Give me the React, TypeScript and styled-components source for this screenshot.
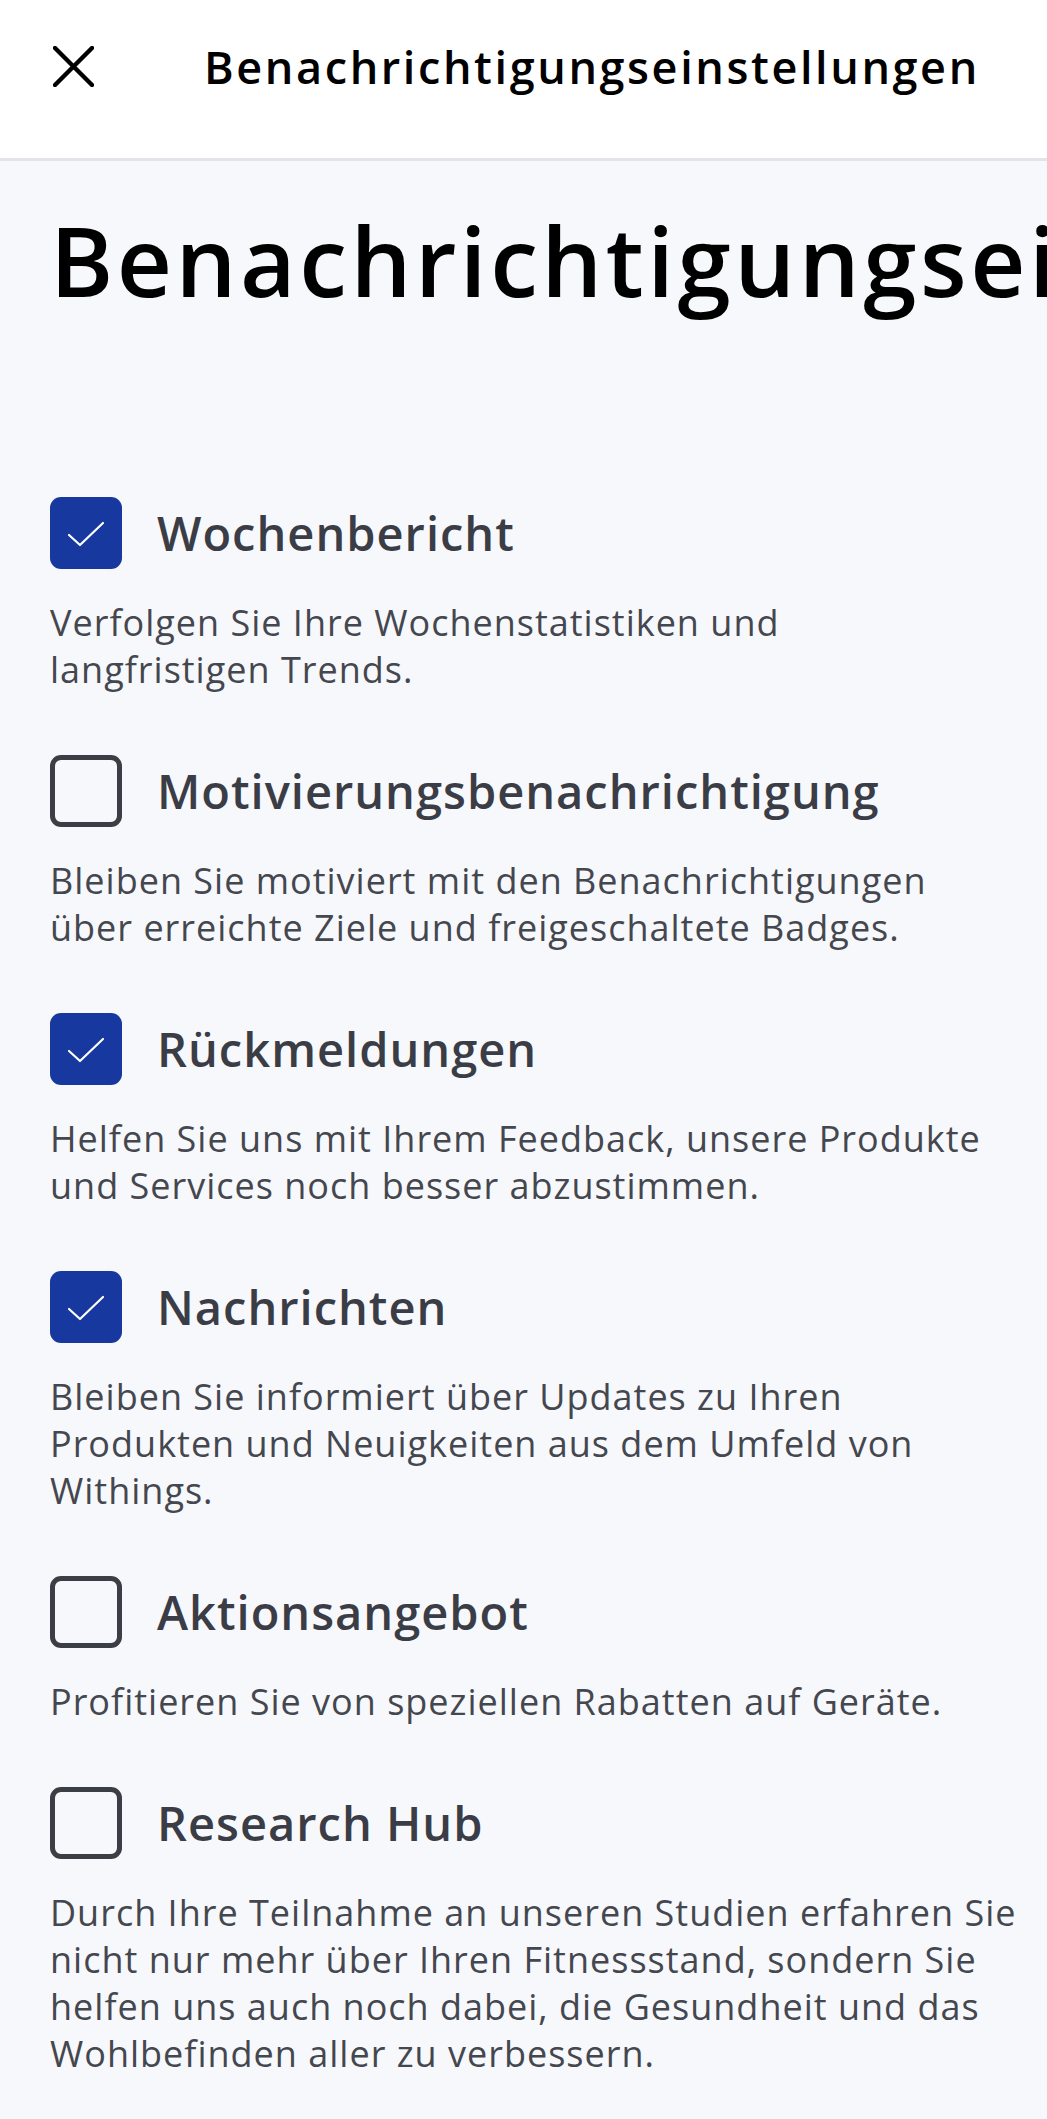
import { useState } from "react";
import styled, { createGlobalStyle } from "styled-components";

const GlobalStyle = createGlobalStyle`
  * {
    box-sizing: border-box;
  }
  html, body {
    margin: 0;
    padding: 0;
    background-color: #f7f8fc;
    overflow-x: hidden;
  }
  body {
    font-family: "Open Sans", "Noto Sans", sans-serif;
    -webkit-font-smoothing: antialiased;
  }
`;

const Page = styled.div`
  min-height: 100vh;
  background-color: #f7f8fc;
`;

const TopBar = styled.header`
  display: flex;
  align-items: center;
  height: 161px;
  padding: 0 40px 25px 53px;
  background-color: #ffffff;
  border-bottom: 3px solid #e3e4ea;
`;

const CloseBtn = styled.button`
  all: unset;
  display: flex;
  align-items: center;
  justify-content: center;
  width: 41px;
  height: 41px;
  cursor: pointer;
`;

const TopTitle = styled.h2`
  margin: 0 0 0 110px;
  font-size: 45px;
  font-weight: 600;
  letter-spacing: 2.6px;
  color: #000000;
  white-space: nowrap;
`;

const Main = styled.main`
  padding: 41px 40px 40px 50px;
`;

const PageTitle = styled.h1`
  margin: 0;
  font-size: 96px;
  line-height: 1.2;
  font-weight: 600;
  letter-spacing: 3.5px;
  color: #000000;
  white-space: nowrap;
`;

const List = styled.ul`
  list-style: none;
  margin: 180px 0 0;
  padding: 0;
  display: flex;
  flex-direction: column;
  gap: 62px;
`;

const Item = styled.li`
  display: flex;
  flex-direction: column;
  gap: 30px;
`;

const Row = styled.label`
  display: flex;
  align-items: center;
  gap: 35px;
  cursor: pointer;
`;

const Box = styled.span<{ $checked: boolean }>`
  flex: none;
  display: flex;
  align-items: center;
  justify-content: center;
  width: 72px;
  height: 72px;
  border-radius: 11px;
  background-color: ${(props) => (props.$checked ? "#17389f" : "transparent")};
  border: ${(props) => (props.$checked ? "none" : "5px solid #3c3e46")};
`;

const HiddenInput = styled.input`
  position: absolute;
  opacity: 0;
  width: 0;
  height: 0;
`;

const ItemTitle = styled.span`
  font-size: 47px;
  font-weight: 600;
  letter-spacing: 1px;
  color: #3b3d46;
`;

const Desc = styled.p`
  margin: 0;
  font-size: 36px;
  line-height: 47px;
  font-weight: 400;
  letter-spacing: 1px;
  color: #45474f;
`;

const Line = styled.span`
  display: block;
  white-space: nowrap;
`;

interface ISetting {
  id: string;
  title: string;
  lines: string[];
  on: boolean;
}

const settings: ISetting[] = [
  {
    id: "weekly",
    title: "Wochenbericht",
    lines: ["Verfolgen Sie Ihre Wochenstatistiken und", "langfristigen Trends."],
    on: true,
  },
  {
    id: "motivation",
    title: "Motivierungsbenachrichtigung",
    lines: [
      "Bleiben Sie motiviert mit den Benachrichtigungen",
      "über erreichte Ziele und freigeschaltete Badges.",
    ],
    on: false,
  },
  {
    id: "feedback",
    title: "Rückmeldungen",
    lines: [
      "Helfen Sie uns mit Ihrem Feedback, unsere Produkte",
      "und Services noch besser abzustimmen.",
    ],
    on: true,
  },
  {
    id: "news",
    title: "Nachrichten",
    lines: [
      "Bleiben Sie informiert über Updates zu Ihren",
      "Produkten und Neuigkeiten aus dem Umfeld von",
      "Withings.",
    ],
    on: true,
  },
  {
    id: "promo",
    title: "Aktionsangebot",
    lines: ["Profitieren Sie von speziellen Rabatten auf Geräte."],
    on: false,
  },
  {
    id: "research",
    title: "Research Hub",
    lines: [
      "Durch Ihre Teilnahme an unseren Studien erfahren Sie",
      "nicht nur mehr über Ihren Fitnessstand, sondern Sie",
      "helfen uns auch noch dabei, die Gesundheit und das",
      "Wohlbefinden aller zu verbessern.",
    ],
    on: false,
  },
];

function CloseIcon() {
  return (
    <svg width="41" height="41" viewBox="0 0 41 41" fill="none">
      <path
        d="M2 2L39 39M39 2L2 39"
        stroke="#000"
        strokeWidth="4.4"
        strokeLinecap="round"
      />
    </svg>
  );
}

function Tick() {
  return (
    <svg width="72" height="72" viewBox="0 0 72 72" fill="none">
      <path
        d="M19 38L30 48L53 26"
        stroke="#fff"
        strokeWidth="2.2"
        strokeLinecap="round"
        strokeLinejoin="round"
      />
    </svg>
  );
}

function App() {
  const [state, setState] = useState<Record<string, boolean>>(() =>
    Object.fromEntries(settings.map((s) => [s.id, s.on]))
  );

  const toggle = (id: string) =>
    setState((prev) => ({ ...prev, [id]: !prev[id] }));

  return (
    <>
      <GlobalStyle />
      <Page>
        <TopBar>
          <CloseBtn aria-label="Schließen">
            <CloseIcon />
          </CloseBtn>
          <TopTitle>Benachrichtigungseinstellungen</TopTitle>
        </TopBar>
        <Main>
          <PageTitle>Benachrichtigungseinstellungen</PageTitle>
          <List>
            {settings.map((s) => (
              <Item key={s.id}>
                <Row>
                  <HiddenInput
                    type="checkbox"
                    checked={state[s.id]}
                    onChange={() => toggle(s.id)}
                  />
                  <Box $checked={state[s.id]}>{state[s.id] && <Tick />}</Box>
                  <ItemTitle>{s.title}</ItemTitle>
                </Row>
                <Desc>
                  {s.lines.map((line) => (
                    <Line key={line}>{line}</Line>
                  ))}
                </Desc>
              </Item>
            ))}
          </List>
        </Main>
      </Page>
    </>
  );
}

export default App;
